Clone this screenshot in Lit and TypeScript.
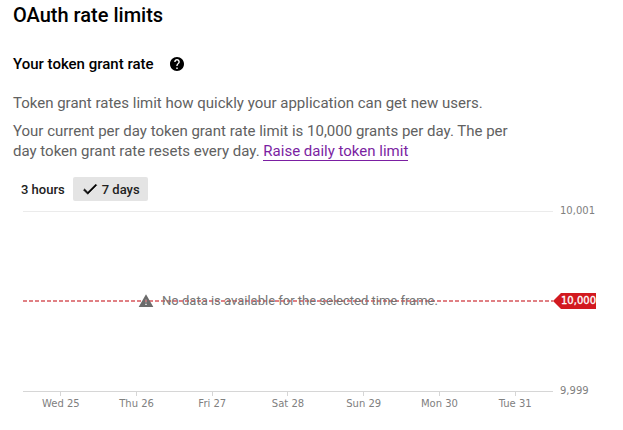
import { LitElement, html, css } from "lit";
import { customElement, property, state } from "lit/decorators.js";

@customElement("rate-chart")
class RateChart extends LitElement {
  @property({ attribute: false }) days: string[] = [];

  static styles = css`
    :host {
      display: block;
      font-family: "DejaVu Sans", sans-serif;
      font-size: 10px;
      line-height: 16px;
      color: #808080;
    }
    .chart {
      display: grid;
      grid-template-columns: 1fr 43px;
    }
    .plot {
      position: relative;
      display: flex;
      align-items: center;
      box-sizing: border-box;
      height: 181px;
      padding-bottom: 1px;
      border-top: 1px solid #ebebeb;
      border-bottom: 1px solid #d6d6d6;
    }
    .limit {
      flex: 1;
      height: 2px;
      background: repeating-linear-gradient(to right, #e08084 0 4px, transparent 4px 6px);
    }
    .message {
      position: absolute;
      inset: 0 0 1px;
      display: flex;
      align-items: center;
      justify-content: center;
      gap: 8px;
      font-family: Roboto, sans-serif;
      font-size: 13px;
      color: #757575;
    }
    .message svg {
      width: 16px;
      height: 16px;
      fill: #6b6b6b;
    }
    .values {
      display: flex;
      flex-direction: column;
      justify-content: space-between;
      margin: -8px 0 -7px;
    }
    .value {
      padding-left: 7px;
    }
    .flag {
      padding-left: 8px;
      background: #d2191f;
      color: #fff;
      -webkit-text-stroke: 0.3px #fff;
      clip-path: polygon(0 50%, 8px 0, 100% 0, 100% 100%, 8px 100%);
    }
    .days {
      display: grid;
      grid-auto-flow: column;
      grid-auto-columns: 1fr;
    }
    .day {
      display: flex;
      flex-direction: column;
      align-items: center;
    }
    .day::before {
      content: "";
      width: 1px;
      height: 4px;
      background: #d6d6d6;
    }
  `;

  render() {
    return html`
      <div class="chart">
        <div class="plot">
          <div class="limit"></div>
          <div class="message" role="status">
            <svg viewBox="0 0 24 24" aria-hidden="true"><path d="M1 21h22L12 2 1 21zm12-3h-2v-2h2v2zm0-4h-2v-4h2v4z" /></svg>
            <span>No data is available for the selected time frame.</span>
          </div>
        </div>
        <div class="values">
          <span class="value">10,001</span>
          <span class="flag">10,000</span>
          <span class="value">9,999</span>
        </div>
        <div class="days">${this.days.map((d) => html`<span class="day">${d}</span>`)}</div>
      </div>
    `;
  }
}

@customElement("app-root")
class AppRoot extends LitElement {
  @state() private range = "7 days";

  private ranges = ["3 hours", "7 days"];
  private days = ["Wed 25", "Thu 26", "Fri 27", "Sat 28", "Sun 29", "Mon 30", "Tue 31"];

  static styles = css`
    :host {
      display: block;
      padding: 3px 27px 16px 13px;
      background: #fff;
      font-family: Roboto, sans-serif;
      color: #000;
    }
    h1 {
      margin: 0;
      font-size: 20px;
      line-height: 24px;
      font-weight: 500;
    }
    .subhead {
      display: flex;
      align-items: center;
      gap: 16px;
      margin-top: 27px;
    }
    h2 {
      margin: 0;
      font-size: 15px;
      line-height: 20px;
      font-weight: 500;
    }
    button {
      border: 0;
      background: none;
      font: inherit;
      color: inherit;
      cursor: pointer;
    }
    .help {
      display: flex;
      padding: 0;
    }
    .help svg {
      width: 14px;
      height: 14px;
    }
    p {
      max-width: 520px;
      margin: 8px 0 0;
      font-size: 15px;
      line-height: 20px;
      color: #616161;
    }
    .subhead + p {
      margin-top: 19px;
    }
    a {
      color: #7b1fa2;
      text-decoration: none;
      border-bottom: 1px solid;
    }
    .ranges {
      display: flex;
      margin-top: 16px;
      font-size: 13px;
      font-weight: 500;
      color: #212121;
    }
    .range {
      display: flex;
      align-items: center;
      gap: 3px;
      height: 24px;
      padding: 0 8px;
      border-radius: 2px;
    }
    .range[aria-pressed="true"] {
      background: #e4e4e4;
    }
    .range svg {
      width: 18px;
      height: 18px;
      stroke: currentColor;
    }
    rate-chart {
      margin: 10px 0 0 10px;
    }
  `;

  render() {
    return html`
      <h1>OAuth rate limits</h1>
      <div class="subhead">
        <h2>Your token grant rate</h2>
        <button class="help" aria-label="Help">
          <svg viewBox="2 2 20 20" aria-hidden="true"><path d="M12 2C6.48 2 2 6.48 2 12s4.48 10 10 10 10-4.48 10-10S17.52 2 12 2zm1 17h-2v-2h2v2zm2.07-7.75l-.9.92C13.45 12.9 13 13.5 13 15h-2v-.5c0-1.1.45-2.1 1.17-2.83l1.24-1.26c.37-.36.59-.86.59-1.41 0-1.1-.9-2-2-2s-2 .9-2 2H8c0-2.21 1.79-4 4-4s4 1.79 4 4c0 .88-.36 1.68-.93 2.25z" /></svg>
        </button>
      </div>
      <p>Token grant rates limit how quickly your application can get new users.</p>
      <p>
        Your current per day token grant rate limit is 10,000 grants per day. The per day token
        grant rate resets every day. <a href="#raise">Raise daily token limit</a>
      </p>
      <div class="ranges" role="group" aria-label="Time frame">
        ${this.ranges.map(
          (r) => html`<button
            class="range"
            aria-pressed=${r === this.range ? "true" : "false"}
            @click=${() => (this.range = r)}
          >
            ${r === this.range
              ? html`<svg viewBox="0 0 24 24" aria-hidden="true"><path d="M9 16.17L4.83 12l-1.42 1.41L9 19 21 7l-1.41-1.41z" /></svg>`
              : ""}
            ${r}
          </button>`
        )}
      </div>
      <rate-chart .days=${this.days}></rate-chart>
    `;
  }
}
